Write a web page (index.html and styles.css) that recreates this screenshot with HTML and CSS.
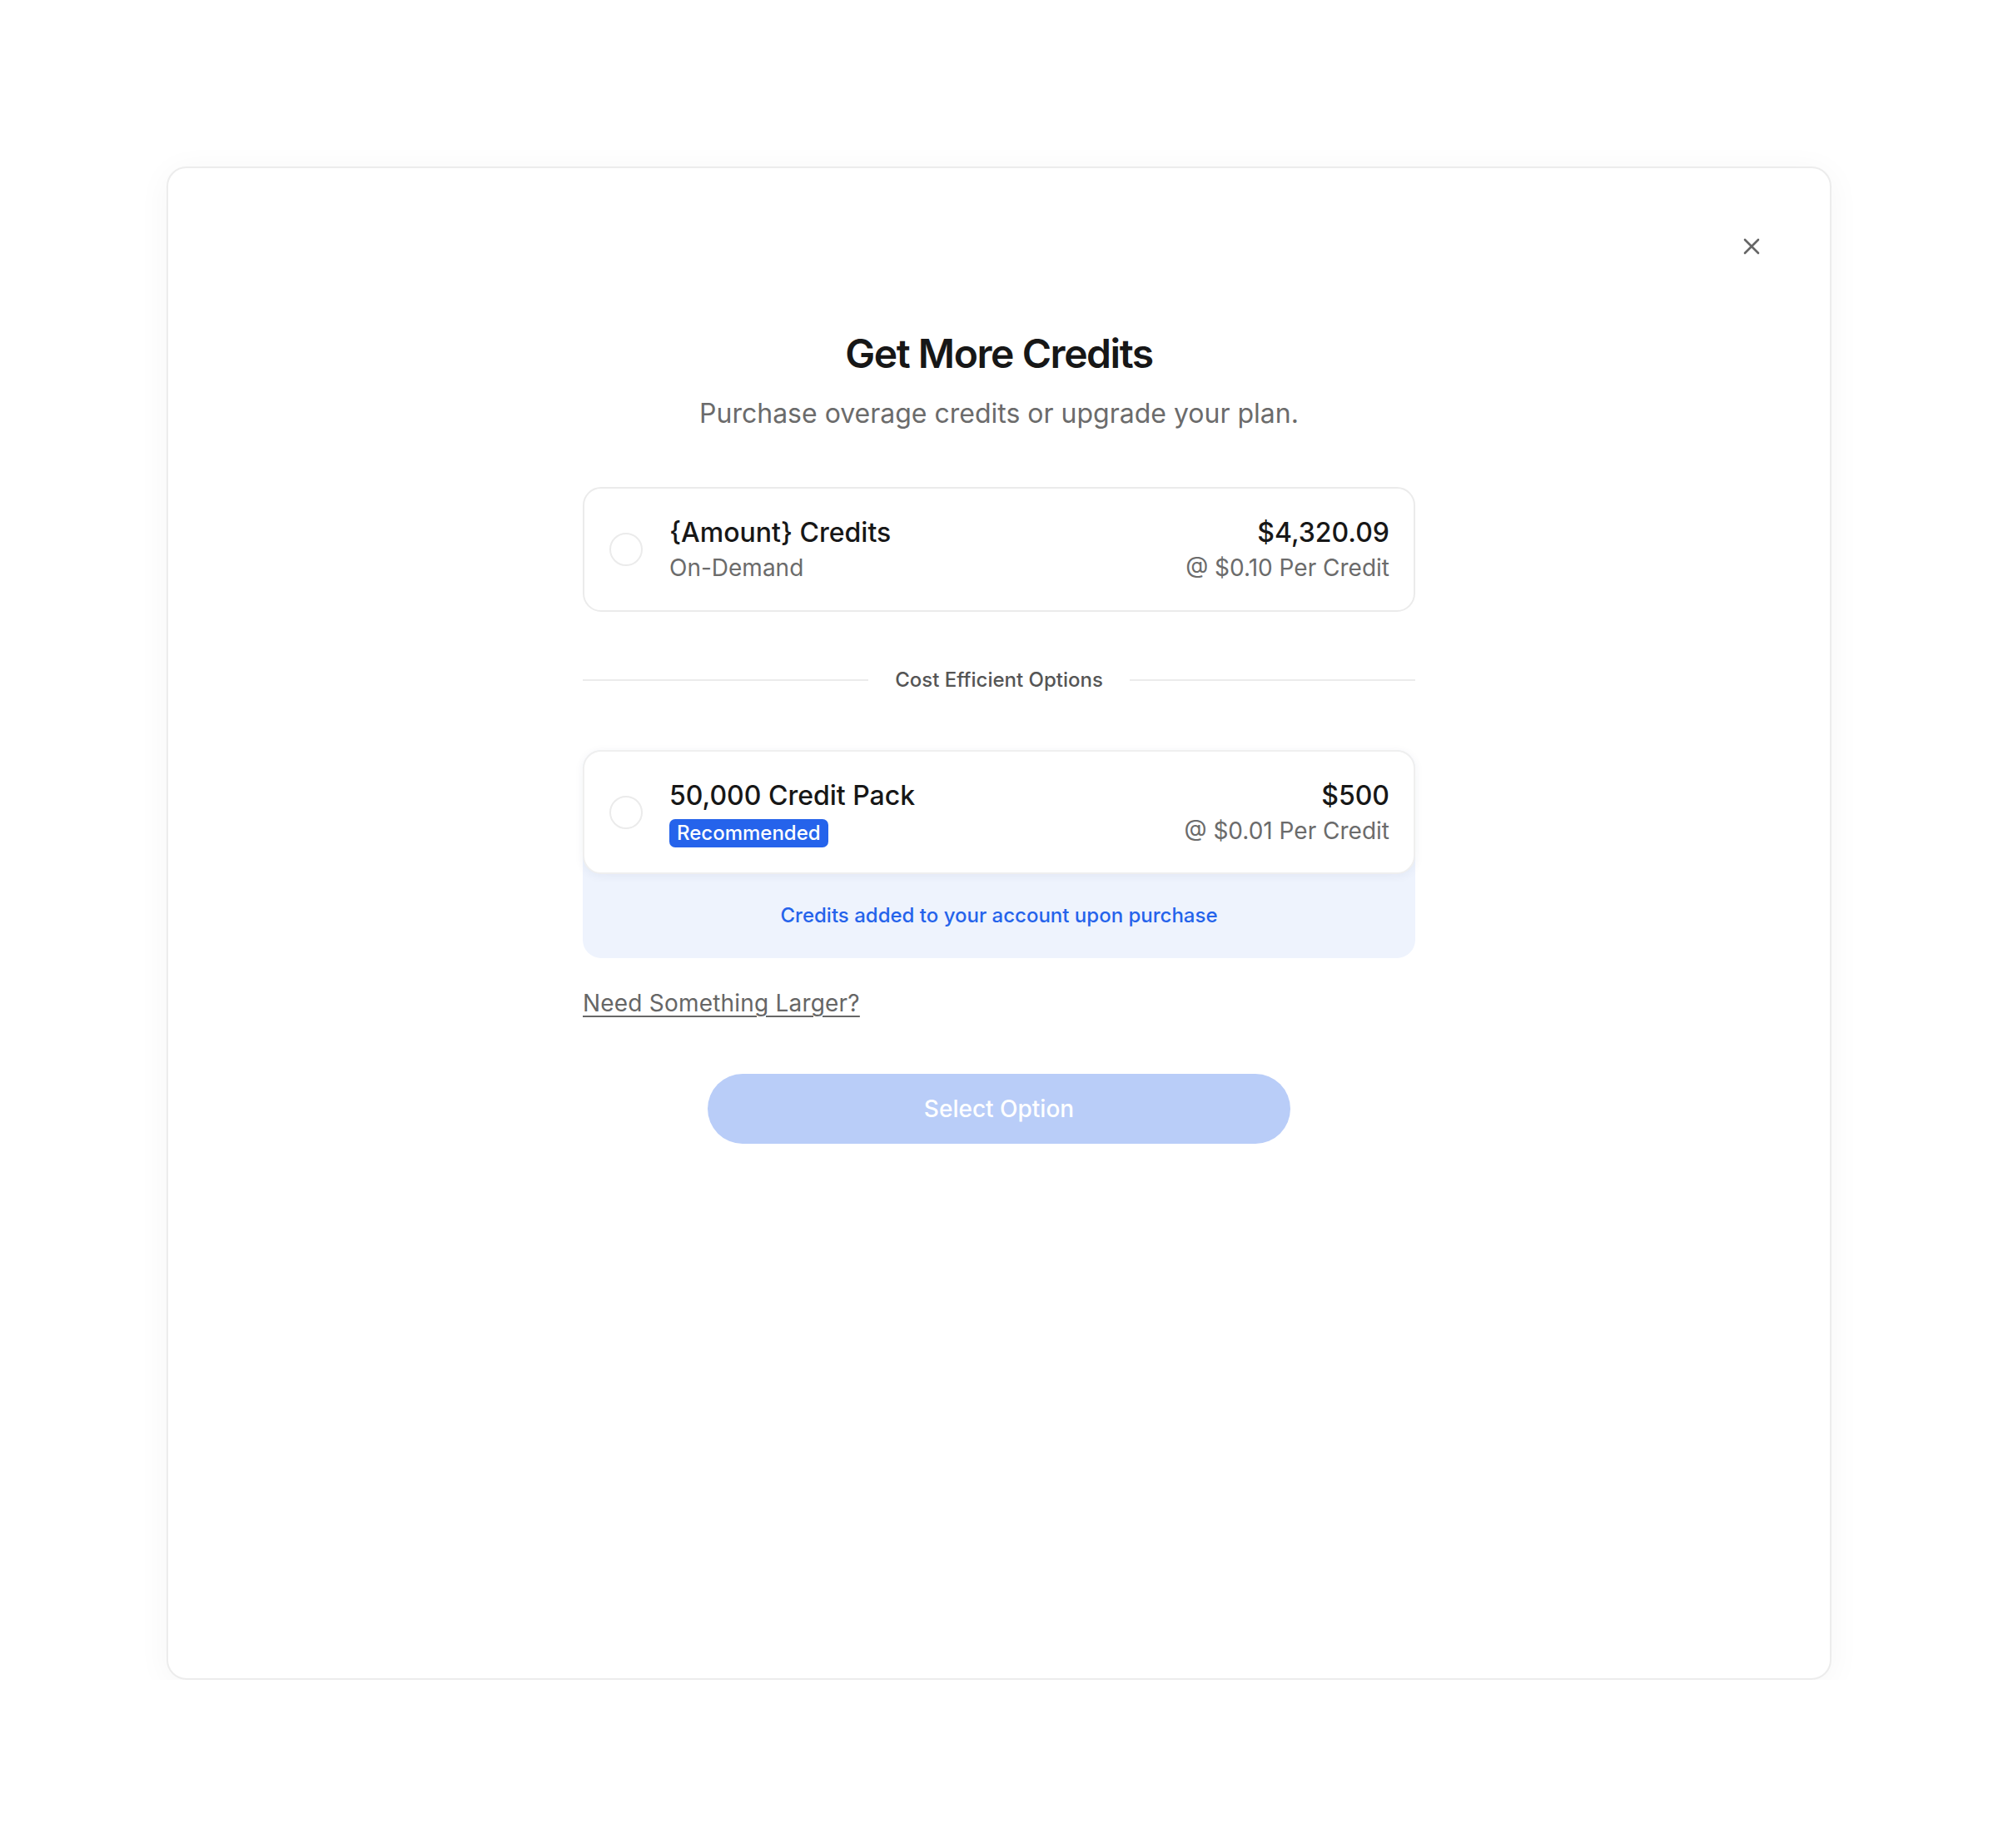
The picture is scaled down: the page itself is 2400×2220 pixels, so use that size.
FILE: index.html
```html
<!DOCTYPE html>
<html lang="en">
<head>
<meta charset="utf-8">
<title>Get More Credits</title>
<link rel="stylesheet" href="styles.css">
</head>
<body>
<div class="modal">
  <button class="close" aria-label="Close">
    <svg width="20" height="20" viewBox="0 0 20 20"><path d="M2 2L18 18M18 2L2 18" stroke="#666" stroke-width="2.6" stroke-linecap="round" fill="none"/></svg>
  </button>
  <div class="content">
    <h1 class="title">Get More Credits</h1>
    <p class="subtitle">Purchase overage credits or upgrade your plan.</p>

    <div class="option">
      <span class="radio"></span>
      <div class="info">
        <div class="name">{Amount} Credits</div>
        <div class="meta">On-Demand</div>
      </div>
      <div class="pricing">
        <div class="price">$4,320.09</div>
        <div class="meta">@ $0.10 Per Credit</div>
      </div>
    </div>

    <div class="divider">
      <span class="line"></span>
      <span class="divider-text">Cost Efficient Options</span>
      <span class="line"></span>
    </div>

    <div class="pack">
      <div class="option raised">
        <span class="radio"></span>
        <div class="info">
          <div class="name">50,000 Credit Pack</div>
          <span class="badge">Recommended</span>
        </div>
        <div class="pricing">
          <div class="price">$500</div>
          <div class="meta">@ $0.01 Per Credit</div>
        </div>
      </div>
      <div class="pack-note">Credits added to your account upon purchase</div>
    </div>

    <a class="larger" href="#">Need Something Larger?</a>

    <button class="select">Select Option</button>
  </div>
</div>
</body>
</html>
```
FILE: styles.css
```css
* { box-sizing: border-box; }
html, body { margin: 0; background: #ffffff; }
body {
  padding: 200px 200px 0 200px;
  font-family: Inter, "Noto Sans", Arial, sans-serif;
  color: #1a1a1a;
}
.modal {
  position: relative;
  width: 2000px;
  height: 1818px;
  background: #fff;
  border: 2px solid #ececec;
  border-radius: 24px;
  box-shadow: 0 6px 40px rgba(0, 0, 0, 0.045);
  padding-top: 193px;
}
.close {
  position: absolute;
  top: 84px;
  right: 84px;
  width: 20px;
  height: 20px;
  padding: 0;
  border: 0;
  background: none;
  display: flex;
}
.content {
  width: 1000px;
  margin: 0 auto;
  display: flex;
  flex-direction: column;
}
.title {
  margin: 0;
  text-align: center;
  font-size: 48px;
  line-height: 60px;
  font-weight: 600;
  letter-spacing: -0.03em;
  color: #171717;
}
.subtitle {
  margin: 18px 0 0;
  text-align: center;
  font-size: 32px;
  line-height: 48px;
  color: #6b6b6b;
}
.option {
  margin-top: 64px;
  height: 150px;
  border: 2px solid #ebebeb;
  border-radius: 22px;
  background: #fff;
  padding: 0 29px 0 30px;
  display: flex;
  align-items: center;
}
.radio {
  width: 40px;
  height: 40px;
  border: 2px solid #ebebeb;
  border-radius: 50%;
  flex: none;
}
.info {
  margin-left: 32px;
  flex: 1;
  display: flex;
  flex-direction: column;
  align-items: flex-start;
}
.name, .price {
  font-size: 32px;
  line-height: 44px;
  font-weight: 500;
  color: #171717;
}
.meta {
  font-size: 28px;
  line-height: 40px;
  color: #6b6b6b;
}
.pricing {
  text-align: right;
}
.divider {
  margin: 66px 0 68px;
  display: flex;
  align-items: center;
  gap: 32px;
}
.line {
  flex: 1;
  height: 2px;
  background: #ebebeb;
}
.divider-text {
  font-size: 24px;
  line-height: 32px;
  font-weight: 500;
  color: #555;
}
.pack {
  background: #eef3fd;
  border-radius: 22px;
  display: flex;
  flex-direction: column;
}
.pack .option {
  margin-top: 0;
  height: 149px;
  border-color: #efefef;
}
.option.raised {
  box-shadow: 0 2px 12px rgba(30, 50, 100, 0.06);
}
.badge {
  margin-top: 6px;
  background: #2563eb;
  color: #fff;
  font-size: 24px;
  line-height: 34px;
  font-weight: 500;
  padding: 0 9px;
  border-radius: 7px;
}
.pack-note {
  padding: 34px 0 35px;
  text-align: center;
  font-size: 24px;
  line-height: 32px;
  font-weight: 500;
  color: #2563eb;
}
.larger {
  margin-top: 34px;
  align-self: flex-start;
  font-size: 28px;
  line-height: 40px;
  letter-spacing: 0.2px;
  color: #666;
  text-decoration: underline;
  text-decoration-thickness: 2px;
  text-underline-offset: 5px;
}
.select {
  margin: 65px auto 0;
  width: 700px;
  height: 84px;
  border: 0;
  border-radius: 42px;
  background: #b9cdf8;
  color: #fff;
  font-family: inherit;
  font-size: 28px;
  font-weight: 500;
}
```
